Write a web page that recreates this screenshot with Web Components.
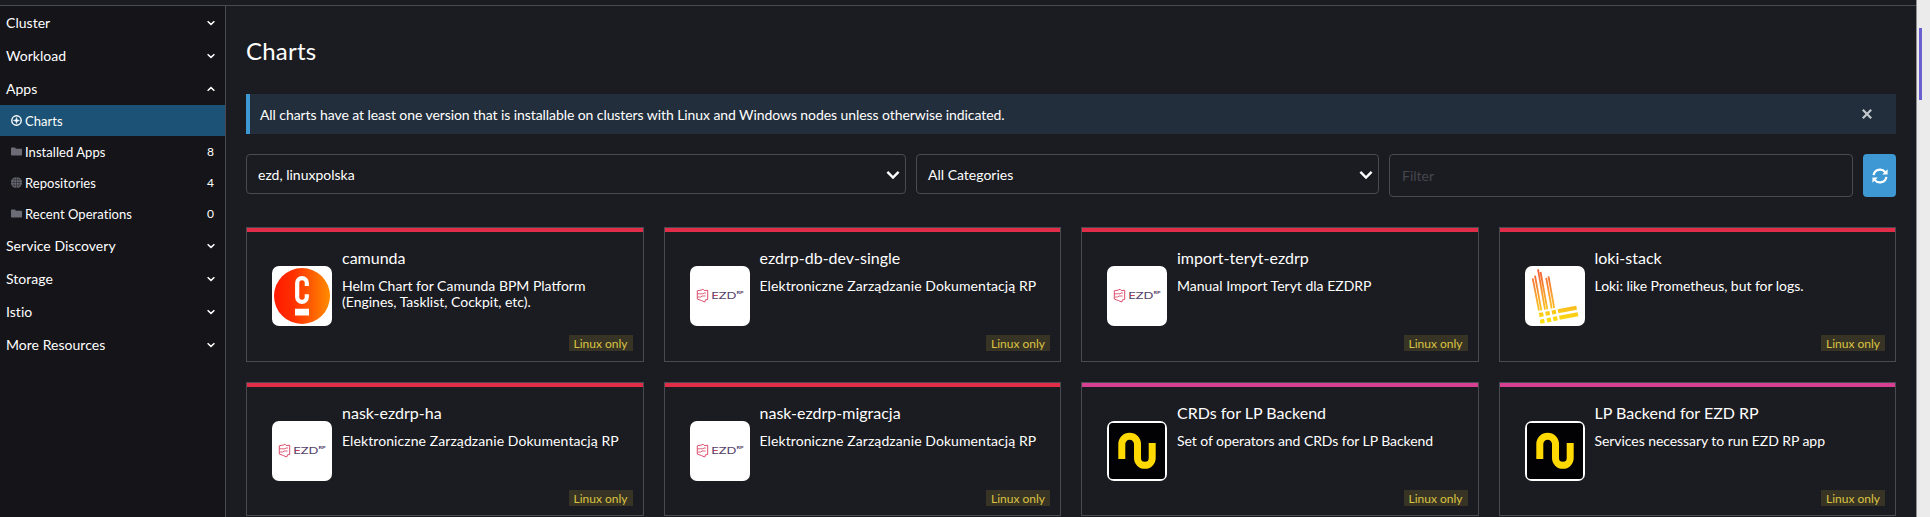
<!DOCTYPE html>
<html lang="en">
<head>
<meta charset="utf-8">
<title>Charts</title>
<style>
html,body{margin:0;height:517px;overflow:hidden;background:#1b1c21}
body{font-family:Lato,"Noto Sans",sans-serif;font-size:14px;color:#fff}
</style>
</head>
<body>
<app-shell>
  <side-nav slot="nav">
    <nav-group>Cluster</nav-group>
    <nav-group>Workload</nav-group>
    <nav-group open>Apps</nav-group>
    <nav-item icon="compass" active>Charts</nav-item>
    <nav-item icon="folder" count="8">Installed Apps</nav-item>
    <nav-item icon="globe" count="4">Repositories</nav-item>
    <nav-item icon="folder" count="0">Recent Operations</nav-item>
    <nav-group>Service Discovery</nav-group>
    <nav-group>Storage</nav-group>
    <nav-group>Istio</nav-group>
    <nav-group>More Resources</nav-group>
  </side-nav>
  <page-title>Charts</page-title>
  <info-banner>All charts have at least one version that is installable on clusters with Linux and Windows nodes unless otherwise indicated.</info-banner>
  <filter-bar>
    <select-box style="width:660px">ezd, linuxpolska</select-box>
    <select-box style="width:463px">All Categories</select-box>
    <filter-field>Filter</filter-field>
    <refresh-button></refresh-button>
  </filter-bar>
  <card-grid>
    <chart-card logo="camunda"><span slot="name">camunda</span>Helm Chart for Camunda BPM Platform (Engines, Tasklist, Cockpit, etc).</chart-card>
    <chart-card logo="ezd" style="--track:.085px"><span slot="name">ezdrp-db-dev-single</span>Elektroniczne Zarządzanie Dokumentacją RP</chart-card>
    <chart-card logo="ezd"><span slot="name">import-teryt-ezdrp</span>Manual Import Teryt dla EZDRP</chart-card>
    <chart-card logo="loki" style="--track:-.04px"><span slot="name">loki-stack</span>Loki: like Prometheus, but for logs.</chart-card>
    <chart-card logo="ezd" style="--track:.085px"><span slot="name">nask-ezdrp-ha</span>Elektroniczne Zarządzanie Dokumentacją RP</chart-card>
    <chart-card logo="ezd" style="--track:.085px"><span slot="name">nask-ezdrp-migracja</span>Elektroniczne Zarządzanie Dokumentacją RP</chart-card>
    <chart-card logo="wave" style="--band:#d63f92;--track:-.07px"><span slot="name">CRDs for LP Backend</span>Set of operators and CRDs for LP Backend</chart-card>
    <chart-card logo="wave" style="--band:#d63f92;--track:-.06px"><span slot="name">LP Backend for EZD RP</span>Services necessary to run EZD RP app</chart-card>
  </card-grid>
</app-shell>
<script>
const define = (name, render) => customElements.define(name, class extends HTMLElement {
  constructor() { super(); this.attachShadow({ mode: 'open' }); }
  connectedCallback() { this.shadowRoot.innerHTML = render(this); }
});

const icons = {
  compass: `<svg width="11" height="11" viewBox="0 0 11 11"><circle cx="5.5" cy="5.5" r="4.7" fill="none" stroke="#fff" stroke-width="1.4"/><path d="M5.5 2.4L6.3 4.7 8.6 5.5 6.3 6.3 5.5 8.6 4.7 6.3 2.4 5.5 4.7 4.7z" fill="#fff" stroke="#fff" stroke-width=".4"/></svg>`,
  folder: `<svg width="11" height="11" viewBox="0 0 11 11"><path d="M0 2.3Q0 1.5.8 1.5H4L5 2.7H10.2Q11 2.7 11 3.5V8.7Q11 9.5 10.2 9.5H.8Q0 9.5 0 8.7z" fill="#6c6c76"/></svg>`,
  globe: `<svg width="11" height="11" viewBox="0 0 11 11"><circle cx="5.5" cy="5.5" r="5.5" fill="#6c6c76"/><g fill="none" stroke="#141419" stroke-width=".45"><ellipse cx="5.5" cy="5.5" rx="2.6" ry="5.2"/><path d="M5.5 0V11M0 5.5H11M1 2.9H10M1 8.1H10"/></g></svg>`
};

const logos = {
  camunda: `<defs><linearGradient id="g"><stop offset="0" stop-color="#ff1a00"/><stop offset=".35" stop-color="#ff3000"/><stop offset="1" stop-color="#ff8c00"/></linearGradient></defs><circle cx="30" cy="30" r="28" fill="url(#g)"/><path d="M34.8 19.5V16.5A4.8 4.8 0 0 0 25.2 16.5V30.5A4.8 4.8 0 0 0 34.8 30.5V27.7" transform="translate(0 .5)" fill="none" stroke="#fff" stroke-width="4.2"/><path d="M23 42.8H37V49.6H23z" fill="#fff"/>`,
  ezd: `<g fill="none" stroke="#d8395b" stroke-width=".9"><path d="M7.3 24.8L11.5 24 13 23.2 14.2 24.5 17.7 24.3V33.5L15.5 33.8 14.8 36 11.5 34.6 7.3 33z"/><path d="M7.5 27.8H13L14 27H16M8 31H10.8L12 30H15.6" stroke-width=".8"/></g><g font-family="Lato,sans-serif" font-weight="400" fill="#53406b"><text transform="translate(21.2 33) scale(1.32 1)" font-size="9.8" textLength="19" lengthAdjust="spacingAndGlyphs">EZD</text><text transform="translate(46.4 28) scale(1.3 1)" font-size="4.4" font-weight="700" textLength="5.5" lengthAdjust="spacingAndGlyphs">RP</text></g><path d="M23.8 29.5H27.5" stroke="#d8395b" stroke-width="1"/>`,
  loki: `<defs><linearGradient id="g" gradientUnits="userSpaceOnUse" x1="0" y1="3" x2="0" y2="56"><stop offset="0" stop-color="#f05a33"/><stop offset=".5" stop-color="#f9a031"/><stop offset="1" stop-color="#fbe00c"/></linearGradient></defs><g stroke="url(#g)" fill="none"><path stroke-width="1.8" d="M7.7 12.3L14 44.7M10 9.7L16.3 44.3M13 3.3L20 43.7M15.6 6L22.3 43.3M21.2 11.8L26.7 42.5M23.5 10.3L29.2 42"/><path stroke-width="4.2" d="M14.2 49.1L18.4 48.3M20.6 47.8L24.8 47M26.9 46.5L31 45.7M33 45.2L51.6 41.7M15.2 55.7L19.4 54.9M21.9 54.4L26.1 53.6M28.2 53.1L32.4 52.3M34.4 51.8L53 48.2"/></g>`,
  wave: `<rect x="2" y="2" width="56" height="56" rx="3.5" fill="#020204"/><path d="M14.8 38V23A7.85 7.85 0 0 1 30.5 23V37A7.35 7.35 0 0 0 45.2 37V22" fill="none" stroke="#ffd900" stroke-width="7"/>`
};

define('app-shell', () => `<style>
:host{display:flex;flex-direction:column;height:517px}
.top{height:5px;width:1916px;border-bottom:1px solid #4a4b52;background:#1b1c21}
.frame{display:flex;height:517px}
.app{width:1916px;display:flex;flex-direction:column}
.body{display:flex;flex:1;min-height:0}
main{flex:1;min-width:0;padding:0 20px;overflow:hidden}
.gutter{box-sizing:border-box;width:14px;border-left:1px solid #8f8f91;background:#ebebeb;padding:28px 0 0 2px}
.thumb{width:3px;height:72px;background:#6a5fcf}
</style><div class="frame"><div class="app"><div class="top"></div><div class="body"><slot name="nav"></slot><main><slot></slot></main></div></div><div class="gutter"><div class="thumb"></div></div></div>`);

define('side-nav', () => `<style>:host{display:block;width:225px;flex:none;background:#141419;border-right:1px solid #4a4b52}</style><slot></slot>`);

define('nav-group', el => `<style>
:host{display:flex;align-items:center;justify-content:space-between;height:33px;padding:0 10px 0 6px;box-sizing:border-box;line-height:17px;letter-spacing:.03px}
svg{display:block}
</style><span><slot></slot></span><svg width="8" height="6" viewBox="0 0 8 6" fill="none" stroke="#fff" stroke-width="1.5"><path d="${el.hasAttribute('open') ? 'M.6 4.7L4 1.6 7.4 4.7' : 'M.6 1.3L4 4.4 7.4 1.3'}"/></svg>`);

define('nav-item', el => `<style>
:host{display:flex;align-items:center;height:31px;padding:0 11px;box-sizing:border-box;font-size:13px;line-height:16px;letter-spacing:.05px;${el.hasAttribute('active') ? 'background:#1c5275;' : ''}}
svg{display:block;margin-right:3px}
.label{flex:1}
.count{font-size:12px}
</style>${icons[el.getAttribute('icon')]}<span class="label"><slot></slot></span><span class="count">${el.getAttribute('count') || ''}</span>`);

define('page-title', () => `<style>:host{display:block;height:88px;padding-top:30px;box-sizing:border-box;font-size:24px;line-height:30px;letter-spacing:.2px}</style><slot></slot>`);

define('info-banner', () => `<style>
:host{display:flex;align-items:center;justify-content:space-between;height:40px;box-sizing:border-box;border-left:4px solid #3d98d3;background:#222e3b;padding:0 24px 0 10px;margin-bottom:20px;line-height:18px}
span{padding-top:2px;letter-spacing:-.077px}
</style><span><slot></slot></span><svg width="10" height="10" viewBox="0 0 10 10" stroke="#c3c8cd" stroke-width="2.2"><path d="M.8.8L9.2 9.2M9.2.8L.8 9.2"/></svg>`);

define('filter-bar', () => `<style>:host{display:flex;align-items:flex-start;gap:10px;height:43px;margin-bottom:30.2px}</style><slot></slot>`);

define('select-box', () => `<style>
:host{display:flex;align-items:center;justify-content:space-between;flex:none;box-sizing:border-box;height:40px;border:1px solid #4a4b52;border-radius:4px;padding:1px 5px 0 11px}
</style><span><slot></slot></span><svg width="14" height="10" viewBox="0 0 14 10" fill="none" stroke="#fff" stroke-width="2.4"><path d="M1.4 1.8L7 7.6 12.6 1.8"/></svg>`);

define('filter-field', () => `<style>
:host{display:flex;align-items:center;flex:1;box-sizing:border-box;height:43px;border:1px solid #4a4b52;border-radius:4px;padding:0 12px 1px;color:#45464e}
</style><slot></slot>`);

define('refresh-button', () => `<style>
:host{display:flex;align-items:center;justify-content:center;width:33px;height:43px;border-radius:4px;background:#3d98d3}
</style><svg width="16" height="16" viewBox="0 0 16 16"><g fill="none" stroke="#fff" stroke-width="2.2"><path d="M1.6 7.2A6.5 6.5 0 0 1 13.2 4.2M14.4 8.8A6.5 6.5 0 0 1 2.8 11.8"/></g><path d="M15.6 1.2V6.4H10.2zM.4 14.8V9.6H5.8z" fill="#fff"/></svg>`);

define('card-grid', () => `<style>:host{display:grid;grid-template-columns:repeat(4,397.5px);grid-auto-rows:134.4px;gap:20px}</style><slot></slot>`);

define('chart-card', el => `<style>
:host{display:flex;flex-direction:column;box-sizing:border-box;border:1px solid #4a4b52}
.band{height:4px;flex:none;background:var(--band,#e22d48)}
.row{display:flex;padding-left:25px;flex:1}
.logo{width:60px;height:60px;flex:none;margin-top:34px;border-radius:7px;background:#fff;overflow:hidden}
.logo svg{display:block}
.text{margin:16px 15px 0 10px}
.name{font-size:16px;line-height:19px;height:30px}
.desc{line-height:16px;letter-spacing:var(--track,0)}
.badge{align-self:flex-end;margin:0 10px 9.4px 0;height:16px;padding:0 5px;font-size:12px;line-height:17px;background:#383425;color:#dac342}
</style><div class="band"></div><div class="row"><div class="logo"><svg width="60" height="60" viewBox="0 0 60 60">${logos[el.getAttribute('logo')]}</svg></div><div class="text"><div class="name"><slot name="name"></slot></div><div class="desc"><slot></slot></div></div></div><div class="badge">Linux only</div>`);
</script>
</body>
</html>
